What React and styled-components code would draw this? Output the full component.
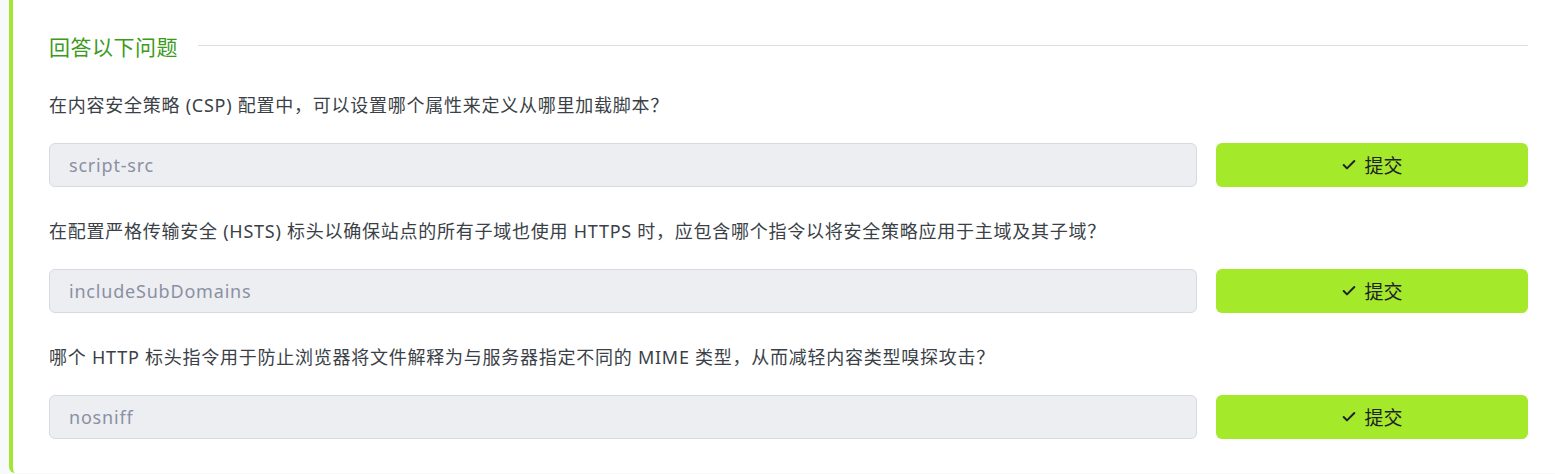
import styled, { createGlobalStyle } from "styled-components"
import { Check } from "lucide-react"

const GlobalStyle = createGlobalStyle`
  html, body {
    margin: 0;
    padding: 0;
    background: #f8f9fb;
    font-family: "Noto Sans", "Noto Sans CJK SC", sans-serif;
  }
`

const questions = [
  {
    text: "在内容安全策略 (CSP) 配置中，可以设置哪个属性来定义从哪里加载脚本？",
    answer: "script-src",
  },
  {
    text: "在配置严格传输安全 (HSTS) 标头以确保站点的所有子域也使用 HTTPS 时，应包含哪个指令以将安全策略应用于主域及其子域？",
    answer: "includeSubDomains",
  },
  {
    text: "哪个 HTTP 标头指令用于防止浏览器将文件解释为与服务器指定不同的 MIME 类型，从而减轻内容类型嗅探攻击？",
    answer: "nosniff",
  },
]

const App = () => {
  return (
    <>
      <GlobalStyle />
      <Page>
        <Card>
          <Heading>
            <span>回答以下问题</span>
            <Rule />
          </Heading>
          {questions.map((q) => (
            <Block key={q.answer}>
              <Question>{q.text}</Question>
              <Row>
                <AnswerInput readOnly value={q.answer} />
                <SubmitButton>
                  <Check size={16} strokeWidth={3} />
                  提交
                </SubmitButton>
              </Row>
            </Block>
          ))}
        </Card>
      </Page>
    </>
  )
}

export default App

//________________________________________________________________________________________________________________________
//styling

const Page = styled.div`
  padding-left: 9px;
  min-height: 474px;
  box-sizing: border-box;
`

const Card = styled.div`
  background: #fff;
  border-left: 4px solid #a3e635;
  border-bottom-left-radius: 6px;
  padding: 33px 27px 34px 36px;
  display: flex;
  flex-direction: column;
  gap: 32px;
`

const Heading = styled.div`
  display: flex;
  align-items: center;
  gap: 20px;
  font-size: 21px;
  letter-spacing: 0.5px;
  line-height: 28px;
  color: #3c9a1c;
`

const Rule = styled.div`
  flex: 1;
  height: 1px;
  background: #dcdde1;
  margin-top: -3px;
`

const Block = styled.div`
  display: flex;
  flex-direction: column;
  gap: 26px;
`

const Question = styled.div`
  font-size: 18px;
  letter-spacing: 0.75px;
  line-height: 24px;
  color: #3b3f47;
`

const Row = styled.div`
  display: flex;
  gap: 19px;
`

const AnswerInput = styled.input`
  flex: 1;
  height: 44px;
  box-sizing: border-box;
  border: 1px solid #d6d9df;
  border-radius: 6px;
  background: #eceef2;
  padding: 0 19px;
  font-family: "Noto Sans", "Noto Sans CJK SC", sans-serif;
  font-size: 18px;
  letter-spacing: 0.8px;
  color: #8b90a3;
  outline: none;
`

const SubmitButton = styled.button`
  width: 312px;
  height: 44px;
  border: none;
  border-radius: 6px;
  background: #a4ea2a;
  color: #1f2229;
  font-family: "Noto Sans", "Noto Sans CJK SC", sans-serif;
  font-size: 19px;
  display: flex;
  align-items: center;
  justify-content: center;
  gap: 7px;
  cursor: pointer;
`
